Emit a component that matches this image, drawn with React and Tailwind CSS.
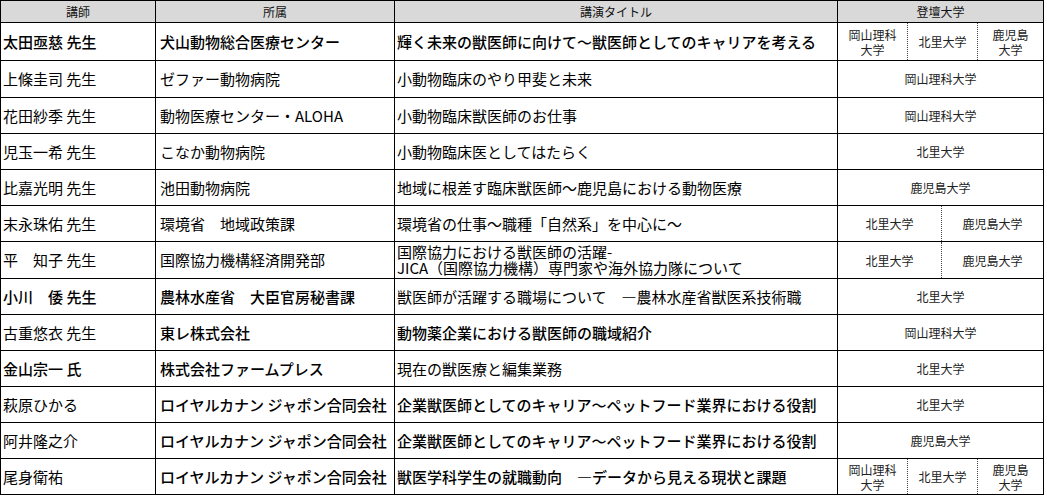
import React from "react";

const rows = [
  { name: "太田亟慈 先生", org: "犬山動物総合医療センター", title: "輝く未来の獣医師に向けて～獣医師としてのキャリアを考える", unis: ["岡山理科\n大学", "北里大学", "鹿児島\n大学"], b: [1, 1, 1], h: "h-[38px]" },
  { name: "上條圭司 先生", org: "ゼファー動物病院", title: "小動物臨床のやり甲斐と未来", unis: ["岡山理科大学"], b: [0, 0, 0], h: "h-[37px]" },
  { name: "花田紗季 先生", org: "動物医療センター・ALOHA", title: "小動物臨床獣医師のお仕事", unis: ["岡山理科大学"], b: [0, 0, 0], h: "h-[36px]" },
  { name: "児玉一希 先生", org: "こなか動物病院", title: "小動物臨床医としてはたらく", unis: ["北里大学"], b: [0, 0, 0], h: "h-[36px]" },
  { name: "比嘉光明 先生", org: "池田動物病院", title: "地域に根差す臨床獣医師～鹿児島における動物医療", unis: ["鹿児島大学"], b: [0, 0, 0], h: "h-[36px]" },
  { name: "末永珠佑 先生", org: "環境省　地域政策課", title: "環境省の仕事～職種「自然系」を中心に～", unis: ["北里大学", "鹿児島大学"], b: [0, 0, 0], h: "h-[36px]" },
  { name: "平　知子 先生", org: "国際協力機構経済開発部", title: "国際協力における獣医師の活躍-\nJICA（国際協力機構）専門家や海外協力隊について", unis: ["北里大学", "鹿児島大学"], b: [0, 0, 0], h: "h-[37px]" },
  { name: "小川　倭 先生", org: "農林水産省　大臣官房秘書課", title: "獣医師が活躍する職場について　―農林水産省獣医系技術職", unis: ["北里大学"], b: [1, 1, 0], h: "h-[36px]" },
  { name: "古重悠衣 先生", org: "東レ株式会社", title: "動物薬企業における獣医師の職域紹介", unis: ["岡山理科大学"], b: [0, 1, 1], h: "h-[36px]" },
  { name: "金山宗一 氏", org: "株式会社ファームプレス", title: "現在の獣医療と編集業務", unis: ["北里大学"], b: [1, 1, 0], h: "h-[36px]" },
  { name: "萩原ひかる", org: "ロイヤルカナン ジャポン合同会社", title: "企業獣医師としてのキャリア～ペットフード業界における役割", unis: ["北里大学"], b: [0, 1, 1], h: "h-[36px]" },
  { name: "阿井隆之介", org: "ロイヤルカナン ジャポン合同会社", title: "企業獣医師としてのキャリア～ペットフード業界における役割", unis: ["鹿児島大学"], b: [0, 1, 1], h: "h-[36px]" },
  { name: "尾身衛祐", org: "ロイヤルカナン ジャポン合同会社", title: "獣医学科学生の就職動向　―データから見える現状と課題", unis: ["岡山理科\n大学", "北里大学", "鹿児島\n大学"], b: [0, 1, 1], h: "h-[36px]" },
];

const Cell = ({ bold, className, children }) => (
  <div
    className={`flex items-center border-r border-b border-black text-[15px] leading-[16px] text-black whitespace-pre-line ${bold ? "font-medium" : "font-normal"} ${className}`}
  >
    {children}
  </div>
);

const Unis = ({ unis }) => {
  if (unis.length === 1) {
    return (
      <div className="flex items-center justify-center border-r border-b border-black text-[12px] text-[#222]">
        {unis[0]}
      </div>
    );
  }
  const widths = unis.length === 3 ? ["w-[70px]", "w-[70px]", "flex-1"] : ["w-[104px]", "flex-1"];
  return (
    <div className="flex border-r border-b border-black text-[12px] leading-[15px] text-[#222]">
      {unis.map((u, i) => (
        <div
          key={i}
          className={`flex items-center justify-center text-center whitespace-pre-line ${widths[i]} ${i < unis.length - 1 ? "border-r border-dotted border-[#444]" : ""}`}
        >
          {u}
        </div>
      ))}
    </div>
  );
};

export default function App() {
  return (
    <div className="w-[1047px] h-[496px] bg-white font-['Noto_Sans_CJK_JP',sans-serif]">
      <div className="w-[1044px] border-l border-t border-black">
        <div className="grid grid-cols-[155px_239px_443px_206px] h-[22px] bg-[#d9d9d9] text-[12px] text-[#111]">
          <div className="flex items-center justify-center border-r border-b border-black">講師</div>
          <div className="flex items-center justify-center border-r border-b border-black">所属</div>
          <div className="flex items-center justify-center border-r border-b border-black">講演タイトル</div>
          <div className="flex items-center justify-center border-r border-b border-black">登壇大学</div>
        </div>
        {rows.map((r, i) => (
          <div key={i} className={`grid grid-cols-[155px_239px_443px_206px] ${r.h}`}>
            <Cell bold={r.b[0]} className="pl-[2px]">{r.name}</Cell>
            <Cell bold={r.b[1]} className="pl-[4px]">{r.org}</Cell>
            <Cell bold={r.b[2]} className="pl-[2px]">{r.title}</Cell>
            <Unis unis={r.unis} />
          </div>
        ))}
      </div>
    </div>
  );
}
